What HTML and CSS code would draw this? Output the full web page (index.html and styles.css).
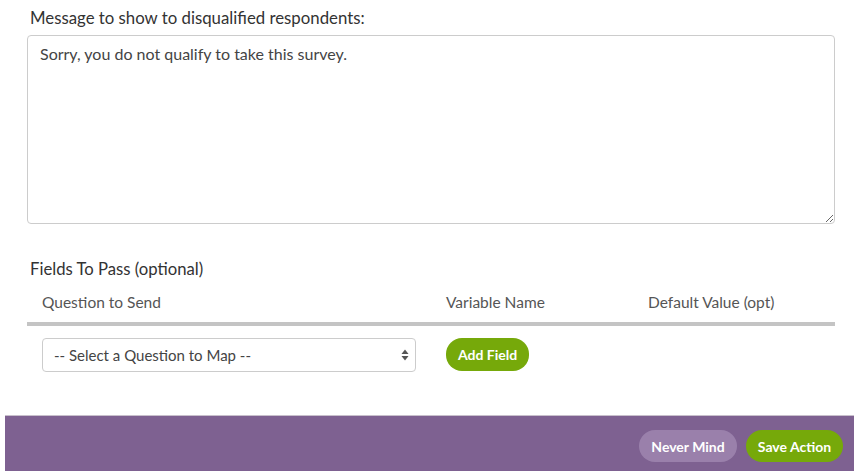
FILE: index.html
```html
<!DOCTYPE html>
<html>
<head>
<meta charset="utf-8">
<link rel="stylesheet" href="styles.css">
</head>
<body>
<div class="content">
  <label class="field-label">Message to show to disqualified respondents:</label>
  <textarea class="message">Sorry, you do not qualify to take this survey.</textarea>
  <div class="section-title">Fields To Pass (optional)</div>
  <div class="fields">
    <div class="fields-head">
      <div class="col col-q">Question to Send</div>
      <div class="col col-v">Variable Name</div>
      <div class="col col-d">Default Value (opt)</div>
    </div>
    <div class="fields-row">
      <div class="col col-q">
        <div class="select">
          <span>-- Select a Question to Map --</span>
          <svg class="arrows" width="8" height="12" viewBox="0 0 8 12"><path d="M4 0.5L7.5 5H0.5Z" fill="#555"/><path d="M4 11.5L7.5 7H0.5Z" fill="#555"/></svg>
        </div>
      </div>
      <div class="col col-v"><button class="btn btn-green btn-add">Add Field</button></div>
    </div>
  </div>
</div>
<footer class="footer">
  <button class="btn btn-muted">Never Mind</button>
  <button class="btn btn-green">Save Action</button>
</footer>
</body>
</html>
```
FILE: styles.css
```css
html, body {
  margin: 0;
  padding: 0;
  background: #fff;
  font-family: Lato, "Open Sans", sans-serif;
  color: #333;
}
.content {
  padding: 8px 0 0 27px;
  width: 808px;
  height: 407px;
  box-sizing: content-box;
}
.field-label {
  display: block;
  font-size: 16.8px;
  line-height: 20px;
  padding-left: 3px;
  margin-bottom: 7px;
  color: #333;
}
.message {
  display: block;
  box-sizing: border-box;
  width: 808px;
  height: 189px;
  border: 1px solid #ccc;
  border-radius: 4px;
  padding: 8px 12px;
  font-family: Lato, sans-serif;
  font-size: 16px;
  line-height: 20px;
  color: #444;
  resize: vertical;
  margin: 0;
}
.section-title {
  margin-top: 35px;
  padding-left: 3px;
  font-size: 16.7px;
  line-height: 20px;
  color: #333;
}
.fields-head {
  display: flex;
  border-bottom: 4px solid #c4c4c4;
  padding-top: 13px;
  padding-bottom: 10px;
  font-size: 15.5px;
  line-height: 20px;
  color: #555;
}
.col-q { width: 419px; padding-left: 15px; box-sizing: border-box; }
.col-v { width: 202px; box-sizing: border-box; }
.col-d { flex: 1; }
.fields-row {
  display: flex;
  padding-top: 12px;
}
.select {
  box-sizing: border-box;
  width: 374px;
  height: 34px;
  border: 1px solid #ccc;
  border-radius: 4px;
  display: flex;
  align-items: center;
  justify-content: space-between;
  padding: 0 6px 0 11px;
  font-size: 15px;
  color: #444;
}
.arrows { display: block; }
.btn {
  font-family: Lato, sans-serif;
  font-weight: 700;
  font-size: 14px;
  color: #fff;
  border: none;
  border-radius: 16px;
  height: 32px;
  padding: 0 12px;
  cursor: pointer;
}
.btn-green { background: #76a90a; }
.btn-add { height: 33px; width: 83px; padding: 0; }
.btn-muted { background: #9a80ab; }
.footer {
  margin-left: 5px;
  height: 55px;
  border-top: 1px solid #c8c0cc;
  background: #7e6191;
  display: flex;
  justify-content: flex-end;
  align-items: flex-start;
  padding-top: 14px;
  box-sizing: border-box;
  height: 56px;
  gap: 9px;
  padding-right: 11px;
}
.footer .btn { width: 98px; padding: 0; }
.footer .btn-green { width: 97px; }
```
